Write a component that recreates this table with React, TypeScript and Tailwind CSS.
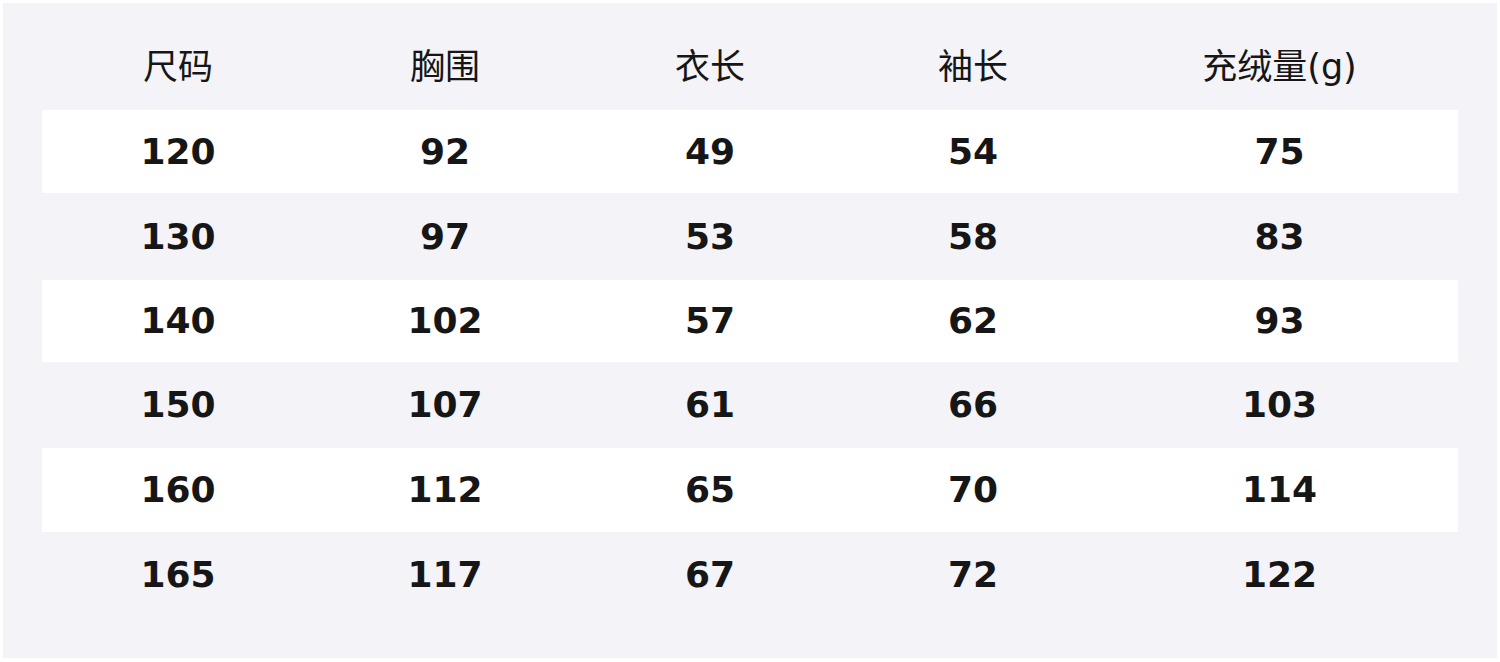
import React from "react";

const headers = ["尺码", "胸围", "衣长", "袖长", "充绒量(g)"];

const rows: string[][] = [
  ["120", "92", "49", "54", "75"],
  ["130", "97", "53", "58", "83"],
  ["140", "102", "57", "62", "93"],
  ["150", "107", "61", "66", "103"],
  ["160", "112", "65", "70", "114"],
  ["165", "117", "67", "72", "122"],
];

// row heights as measured; white rows are a touch shorter
const heights = ["h-[83px]", "h-[87px]", "h-[82px]", "h-[86px]", "h-[84px]", "h-[86px]"];

const cols = "grid grid-cols-[272px_262px_268px_258px_355px]";

export default function App() {
  return (
    <div className="w-[1500px] h-[662px] bg-white p-[3px]">
      <div
        className="w-[1494px] h-[655px] bg-[#f3f3f8] px-[39px] pb-[40px] text-[#161616]"
        style={{ fontFamily: '"DejaVu Sans", "Noto Sans CJK SC", sans-serif' }}
      >
        {/* header */}
        <div className={`${cols} h-[107px] items-center`}>
          {headers.map((h) => (
            <div key={h} className="text-center text-[35px] leading-none pt-[22px]">
              {h}
            </div>
          ))}
        </div>

        {/* body */}
        {rows.map((r, i) => (
          <div
            key={r[0]}
            className={`${cols} ${heights[i]} items-center ${i % 2 === 0 ? "bg-white" : ""}`}
          >
            {r.map((v, j) => (
              <div key={j} className="text-center text-[36px] font-bold leading-none">
                {v}
              </div>
            ))}
          </div>
        ))}
      </div>
    </div>
  );
}
